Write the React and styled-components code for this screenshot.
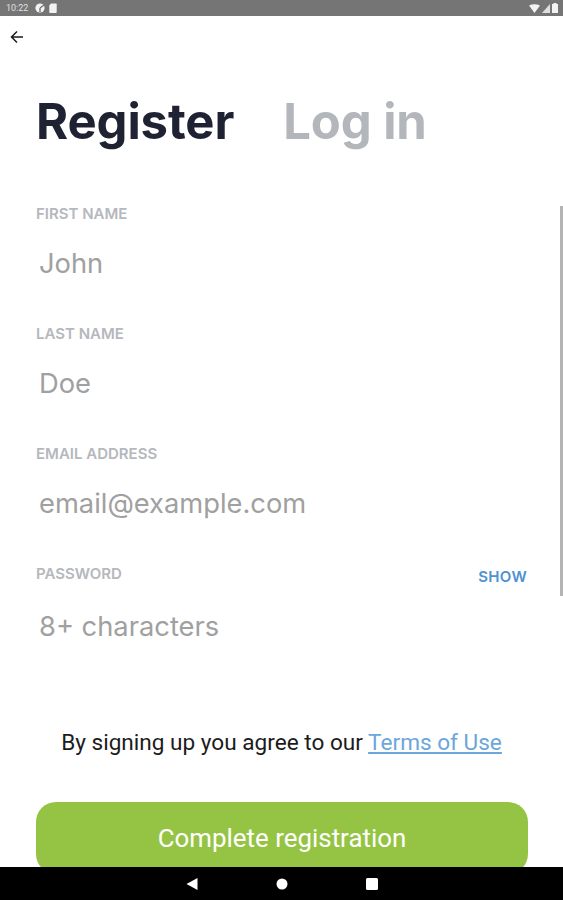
import React from "react";
import styled, { createGlobalStyle } from "styled-components";

const Global = createGlobalStyle`
  html, body { margin: 0; padding: 0; background: #fff; }
  * { box-sizing: border-box; }
`;

const Screen = styled.div`
  width: 563px; height: 900px; display: flex; flex-direction: column;
  font-family: Inter, "Liberation Sans", sans-serif; background: #fff; overflow: hidden; position: relative;
`;
const StatusBar = styled.div`
  height: 16px; flex: none; background: #757575; display: flex; align-items: center;
  justify-content: space-between; padding: 0 5px 0 6px; color: #f2f2f2;
`;
const StatusGroup = styled.div`display: flex; align-items: center; gap: ${p => p.$gap || 4}px;`;
const Time = styled.span`font: 9px Roboto, sans-serif; margin-right: 3px; opacity: .85;`;
const Body = styled.main`flex: 1; min-height: 0; overflow: hidden; display: flex; flex-direction: column;`;
const BackRow = styled.div`height: 42px; flex: none; padding: 14px 0 0 10px; color: #1a1a1a; display: flex;`;
const Tabs = styled.div`display: flex; gap: 49px; padding: 36px 36px 0 36px; height: 147px; flex: none;`;
const Tab = styled.h1`
  margin: 0; font: 700 49px/56px Inter, sans-serif; letter-spacing: -0.1px;
  color: ${p => (p.$active ? "#1e2232" : "#b3b7bc")};
`;
const Form = styled.form`padding: 0 36px; display: flex; flex-direction: column;`;
const Field = styled.div`height: ${p => p.$h || 120}px; display: flex; flex-direction: column;`;
const LabelRow = styled.div`display: flex; justify-content: space-between; align-items: flex-start; height: 18px;`;
const Label = styled.label`font: 600 15px/18px Inter, sans-serif; color: #b5b8bd;`;
const Show = styled.span`font: 600 15px/18px Inter, sans-serif; color: #4f92d2; margin: 3px 0 0 0; letter-spacing: .3px;`;
const Value = styled.div`
  font: 400 27.3px/34px Inter, sans-serif; color: #a0a0a0; margin: ${p => p.$top || 24}px 0 0 3px;
`;
const Agree = styled.p`
  margin: 0; text-align: center; font: 400 22.6px/28px Roboto, sans-serif; color: #1c1c1c; padding-top: 49px;
`;
const Terms = styled.a`color: #6ba6dc; text-decoration: underline;`;
const Submit = styled.button`
  margin: 45px 35px 0 36px; height: 72px; flex: none; border: 0; border-radius: 20px; background: #95c444;
  color: #fff; font: 400 25.9px/32px Roboto, sans-serif; padding: 0; display: block; width: 492px;
`;
const Scrollbar = styled.div`
  position: absolute; right: 0; top: 206px; width: 3px; height: 390px; background: #b4b4b4;
`;
const NavBar = styled.div`
  position: absolute; left: 0; right: 0; bottom: 0; height: 33px; background: #000; display: flex;
  align-items: center; justify-content: center; gap: 78px; padding: 0 0 0 1px; color: #fff;
`;

const Arrow = () => (
  <svg width="14" height="14" viewBox="0 0 14 14" fill="none" stroke="currentColor" strokeWidth="1.5">
    <path d="M13 7H1.6M7 1.5 1.5 7 7 12.5" />
  </svg>
);

export default function App() {
  return (
    <Screen>
      <Global />
      <StatusBar>
        <StatusGroup>
          <Time>10:22</Time>
          <svg width="10" height="10" viewBox="0 0 10 10"><circle cx="5" cy="5" r="4.6" fill="#f2f2f2" /><path d="M5 5 9 2M5 5v4" stroke="#757575" strokeWidth="1.4" /></svg>
          <svg width="8" height="10" viewBox="0 0 8 10"><path d="M2 .5h5a.7.7 0 0 1 .7.7v8a.7.7 0 0 1-.7.7H1a.7.7 0 0 1-.7-.7V2.500z" fill="#f2f2f2" /></svg>
        </StatusGroup>
        <StatusGroup $gap={2}>
          <svg width="11" height="9" viewBox="0 0 11 9"><path d="M0 1.500Q5.500-1 11 1.500L5.500 9z" fill="#f2f2f2" /></svg>
          <svg width="8" height="9" viewBox="0 0 8 9"><path d="M8 0v9H0z" fill="#f2f2f2" opacity=".85" /></svg>
          <svg width="6" height="10" viewBox="0 0 6 10"><path d="M1.500 0h3v1H6v9H0V1h1.500z" fill="#f2f2f2" /></svg>
        </StatusGroup>
      </StatusBar>
      <Body>
        <BackRow><Arrow /></BackRow>
        <Tabs>
          <Tab $active>Register</Tab>
          <Tab>Log in</Tab>
        </Tabs>
        <Form>
          <Field>
            <LabelRow><Label>FIRST NAME</Label></LabelRow>
            <Value>John</Value>
          </Field>
          <Field>
            <LabelRow><Label>LAST NAME</Label></LabelRow>
            <Value>Doe</Value>
          </Field>
          <Field>
            <LabelRow><Label>EMAIL ADDRESS</Label></LabelRow>
            <Value>email@example.com</Value>
          </Field>
          <Field $h={115}>
            <LabelRow><Label>PASSWORD</Label><Show>SHOW</Show></LabelRow>
            <Value $top={27}>8+ characters</Value>
          </Field>
        </Form>
        <Agree>By signing up you agree to our <Terms>Terms of Use</Terms></Agree>
        <Submit type="button">Complete registration</Submit>
      </Body>
      <Scrollbar />
      <NavBar>
        <svg width="12" height="12" viewBox="0 0 12 12"><path d="M11.500 0v12L.5 6z" fill="#fff" /></svg>
        <svg width="12" height="12" viewBox="0 0 12 12"><circle cx="6" cy="6" r="5.500" fill="#fff" /></svg>
        <svg width="12" height="12" viewBox="0 0 12 12"><rect width="12" height="12" rx="1.500" fill="#fff" /></svg>
      </NavBar>
    </Screen>
  );
}
